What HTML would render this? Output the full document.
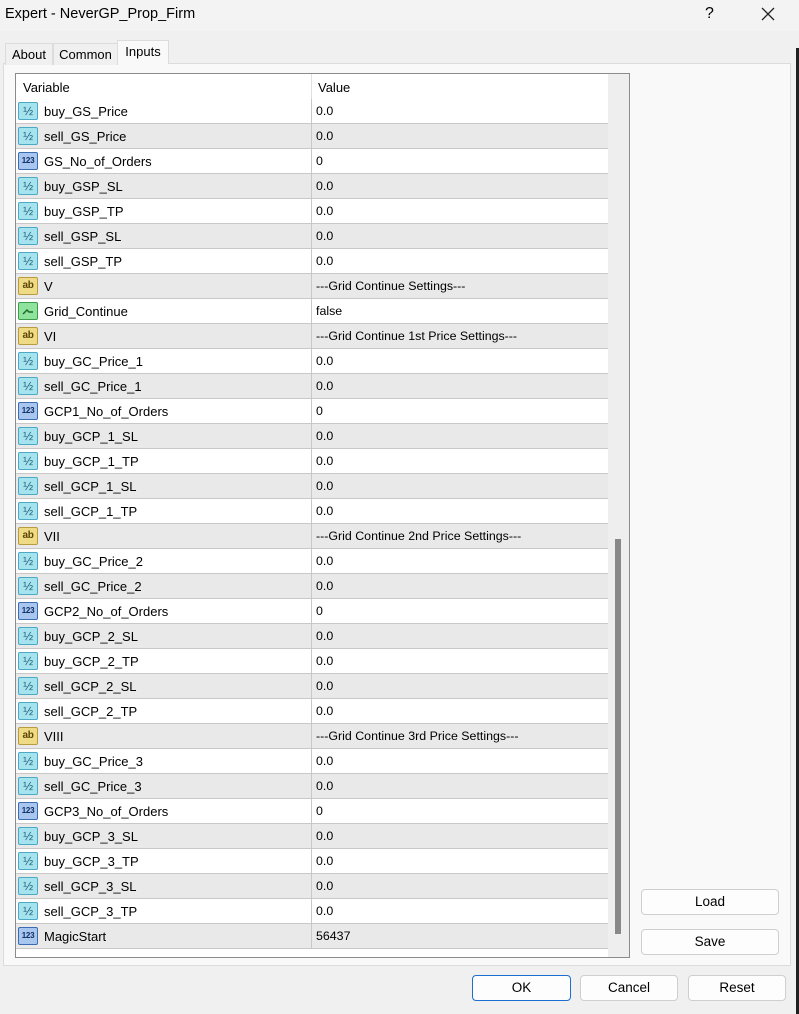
<!DOCTYPE html>
<html><head><meta charset="utf-8"><style>
*{margin:0;padding:0;box-sizing:border-box}
body{width:799px;height:1014px;background:#f0f0f0;font-family:"Liberation Sans",Arial,sans-serif;font-size:13px;color:#000;position:relative;overflow:hidden}
.title{position:absolute;left:0;top:0;width:799px;height:31px;background:#f3f3f3}
.title .t{position:absolute;left:5px;top:6px;font-size:14.5px}
.title .q{position:absolute;left:705px;top:5px;font-size:16px}
.edge{position:absolute;left:796px;top:48px;width:3px;height:966px;background:#202020}
.tab{position:absolute;top:42px;height:22px;font-size:13px;padding-top:3px;text-align:center}
.panel{position:absolute;left:3px;top:63px;width:788px;height:903px;background:#f9f9f9;border:1px solid #dcdcdc}
.grid{position:absolute;left:15px;top:73px;width:615px;height:885px;border:1px solid #8a8a8f;background:#fff;overflow:hidden}
.hdr{position:absolute;left:0;top:0;width:592px;height:26px;background:#fff}
.hdr span{position:absolute;top:6px}
.row{position:absolute;left:0;width:592px;height:25px;border-bottom:1px solid #c8c8c8}
.row.g{background:#e9e9e9}
.row .n{position:absolute;left:28px;top:5px}
.row .v{position:absolute;left:300px;top:5px;font-size:12.4px}
.row .d{position:absolute;left:295px;top:0;width:1px;height:25px;background:#c8c8c8}
.i{position:absolute;left:2px;top:3px;width:20px;height:18px;border:1px solid;border-radius:2px;font-size:8px;font-weight:bold;text-align:center;line-height:16px;letter-spacing:-0.3px}
.f{background:#a6e3ee;border-color:#49aac6;color:#1c5f78;font-size:12px;font-weight:normal}
.n3{background:#a8c6ee;border-color:#3a6cb3;color:#0f2f66}
.s{background:#efda86;border-color:#b79d3a;color:#5c4705;font-size:10px}
.b{background:#8fe39c;border-color:#3b9c4a;color:#1f6a2a}
.sb{position:absolute;left:592px;top:0;width:21px;height:885px;background:#eeeeee}
.th{position:absolute;left:7px;top:465px;width:6px;height:395px;background:#888}
.btn{position:absolute;height:26px;background:#fdfdfd;border:1px solid #cfcfcf;border-radius:4px;text-align:center;line-height:24px;font-size:13.5px}
</style></head><body>
<div class="title"><span class="t">Expert - NeverGP_Prop_Firm</span><span class="q">?</span>
<svg style="position:absolute;left:761px;top:7px" width="14" height="14"><path d="M1 1L13 13M13 1L1 13" stroke="#222" stroke-width="1.3"/></svg></div>
<div class="edge"></div>
<div class="panel"></div>
<div class="tab" style="left:5px;width:48px;border:1px solid #dcdcdc;border-bottom:none;background:#f0f0f0;top:43px">About</div>
<div class="tab" style="left:53px;width:65px;border:1px solid #dcdcdc;border-bottom:none;background:#f0f0f0;top:43px">Common</div>
<div class="tab" style="left:117px;width:52px;top:40px;height:24px;background:#f9f9f9;border:1px solid #dcdcdc;border-bottom:none;padding-top:3px">Inputs</div>
<div class="grid">
<div class="hdr"><span style="left:7px">Variable</span><span style="left:302px">Value</span><div style="position:absolute;left:295px;top:0;width:1px;height:26px;background:#e0e0e0"></div></div>
<div class="row" style="top:25px"><div class="i f">½</div><span class="n">buy_GS_Price</span><div class="d"></div><span class="v">0.0</span></div>
<div class="row g" style="top:50px"><div class="i f">½</div><span class="n">sell_GS_Price</span><div class="d"></div><span class="v">0.0</span></div>
<div class="row" style="top:75px"><div class="i n3">123</div><span class="n">GS_No_of_Orders</span><div class="d"></div><span class="v">0</span></div>
<div class="row g" style="top:100px"><div class="i f">½</div><span class="n">buy_GSP_SL</span><div class="d"></div><span class="v">0.0</span></div>
<div class="row" style="top:125px"><div class="i f">½</div><span class="n">buy_GSP_TP</span><div class="d"></div><span class="v">0.0</span></div>
<div class="row g" style="top:150px"><div class="i f">½</div><span class="n">sell_GSP_SL</span><div class="d"></div><span class="v">0.0</span></div>
<div class="row" style="top:175px"><div class="i f">½</div><span class="n">sell_GSP_TP</span><div class="d"></div><span class="v">0.0</span></div>
<div class="row g" style="top:200px"><div class="i s">ab</div><span class="n">V</span><div class="d"></div><span class="v">---Grid Continue Settings---</span></div>
<div class="row" style="top:225px"><div class="i b"><svg width="18" height="16"><path d="M4 11L8 7L10 9H14" stroke="#1f6a2a" stroke-width="1.5" fill="none"/></svg></div><span class="n">Grid_Continue</span><div class="d"></div><span class="v">false</span></div>
<div class="row g" style="top:250px"><div class="i s">ab</div><span class="n">VI</span><div class="d"></div><span class="v">---Grid Continue 1st Price Settings---</span></div>
<div class="row" style="top:275px"><div class="i f">½</div><span class="n">buy_GC_Price_1</span><div class="d"></div><span class="v">0.0</span></div>
<div class="row g" style="top:300px"><div class="i f">½</div><span class="n">sell_GC_Price_1</span><div class="d"></div><span class="v">0.0</span></div>
<div class="row" style="top:325px"><div class="i n3">123</div><span class="n">GCP1_No_of_Orders</span><div class="d"></div><span class="v">0</span></div>
<div class="row g" style="top:350px"><div class="i f">½</div><span class="n">buy_GCP_1_SL</span><div class="d"></div><span class="v">0.0</span></div>
<div class="row" style="top:375px"><div class="i f">½</div><span class="n">buy_GCP_1_TP</span><div class="d"></div><span class="v">0.0</span></div>
<div class="row g" style="top:400px"><div class="i f">½</div><span class="n">sell_GCP_1_SL</span><div class="d"></div><span class="v">0.0</span></div>
<div class="row" style="top:425px"><div class="i f">½</div><span class="n">sell_GCP_1_TP</span><div class="d"></div><span class="v">0.0</span></div>
<div class="row g" style="top:450px"><div class="i s">ab</div><span class="n">VII</span><div class="d"></div><span class="v">---Grid Continue 2nd Price Settings---</span></div>
<div class="row" style="top:475px"><div class="i f">½</div><span class="n">buy_GC_Price_2</span><div class="d"></div><span class="v">0.0</span></div>
<div class="row g" style="top:500px"><div class="i f">½</div><span class="n">sell_GC_Price_2</span><div class="d"></div><span class="v">0.0</span></div>
<div class="row" style="top:525px"><div class="i n3">123</div><span class="n">GCP2_No_of_Orders</span><div class="d"></div><span class="v">0</span></div>
<div class="row g" style="top:550px"><div class="i f">½</div><span class="n">buy_GCP_2_SL</span><div class="d"></div><span class="v">0.0</span></div>
<div class="row" style="top:575px"><div class="i f">½</div><span class="n">buy_GCP_2_TP</span><div class="d"></div><span class="v">0.0</span></div>
<div class="row g" style="top:600px"><div class="i f">½</div><span class="n">sell_GCP_2_SL</span><div class="d"></div><span class="v">0.0</span></div>
<div class="row" style="top:625px"><div class="i f">½</div><span class="n">sell_GCP_2_TP</span><div class="d"></div><span class="v">0.0</span></div>
<div class="row g" style="top:650px"><div class="i s">ab</div><span class="n">VIII</span><div class="d"></div><span class="v">---Grid Continue 3rd Price Settings---</span></div>
<div class="row" style="top:675px"><div class="i f">½</div><span class="n">buy_GC_Price_3</span><div class="d"></div><span class="v">0.0</span></div>
<div class="row g" style="top:700px"><div class="i f">½</div><span class="n">sell_GC_Price_3</span><div class="d"></div><span class="v">0.0</span></div>
<div class="row" style="top:725px"><div class="i n3">123</div><span class="n">GCP3_No_of_Orders</span><div class="d"></div><span class="v">0</span></div>
<div class="row g" style="top:750px"><div class="i f">½</div><span class="n">buy_GCP_3_SL</span><div class="d"></div><span class="v">0.0</span></div>
<div class="row" style="top:775px"><div class="i f">½</div><span class="n">buy_GCP_3_TP</span><div class="d"></div><span class="v">0.0</span></div>
<div class="row g" style="top:800px"><div class="i f">½</div><span class="n">sell_GCP_3_SL</span><div class="d"></div><span class="v">0.0</span></div>
<div class="row" style="top:825px"><div class="i f">½</div><span class="n">sell_GCP_3_TP</span><div class="d"></div><span class="v">0.0</span></div>
<div class="row g" style="top:850px"><div class="i n3">123</div><span class="n">MagicStart</span><div class="d"></div><span class="v">56437</span></div>
<div class="sb"><div class="th"></div></div>
</div>
<div class="btn" style="left:641px;top:889px;width:138px">Load</div>
<div class="btn" style="left:641px;top:929px;width:138px">Save</div>
<div class="btn" style="left:472px;top:975px;width:99px;border:1px solid #1a6fd0">OK</div>
<div class="btn" style="left:580px;top:975px;width:98px">Cancel</div>
<div class="btn" style="left:688px;top:975px;width:98px">Reset</div>
</body></html>
